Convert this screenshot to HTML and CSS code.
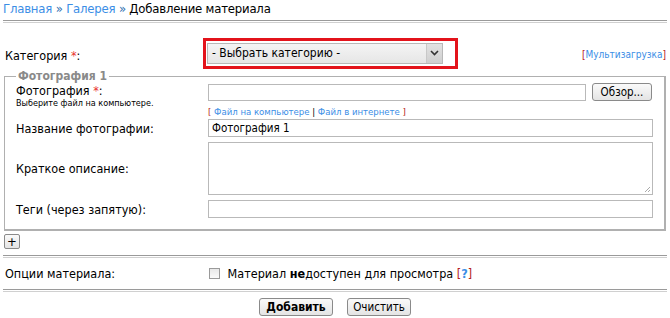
FILE: index.html
```html
<!DOCTYPE html>
<html lang="ru">
<head>
<meta charset="utf-8">
<link rel="stylesheet" href="styles.css">
</head>
<body>
<div class="page">
  <div class="crumbs"><a href="#">Главная</a> <span class="sep">»</span> <a href="#">Галерея</a> <span class="sep">»</span> Добавление материала</div>
  <div class="rule"></div>

  <div class="cat-row">
    <div class="cat-label">Категория <span class="req">*</span>:</div>
    <div class="cat-box">
      <div class="select">
        <span class="select-text">- Выбрать категорию -</span>
        <span class="select-btn"><svg width="9" height="6" viewBox="0 0 9 6"><path d="M1 1 L4.5 4.5 L8 1" fill="none" stroke="#333" stroke-width="1.6"/></svg></span>
      </div>
    </div>
    <div class="multi">[<a href="#">Мультизагрузка</a>]</div>
  </div>

  <fieldset class="photo">
    <legend>Фотография 1</legend>
    <div class="frow r-file">
      <div class="flabel">
        <div>Фотография <span class="req">*</span>:</div>
        <div class="hint">Выберите файл на компьютере.</div>
      </div>
      <div class="fctl">
        <div class="file-line">
          <div class="input file-input"></div>
          <div class="btn browse">Обзор...</div>
        </div>
        <div class="src-links"><span class="br">[</span> <a href="#">Файл на компьютере</a> | <a href="#">Файл в интернете</a> <span class="br">]</span></div>
      </div>
    </div>
    <div class="frow r-name">
      <div class="flabel">Название фотографии:</div>
      <div class="fctl"><div class="input wide">Фотография 1</div></div>
    </div>
    <div class="frow r-desc">
      <div class="flabel">Краткое описание:</div>
      <div class="fctl"><div class="input wide area"><svg class="grip" width="7" height="7" viewBox="0 0 7 7"><path d="M6 1 L1 6 M6 4 L4 6" stroke="#aaa" stroke-width="1"/></svg></div></div>
    </div>
    <div class="frow r-tags">
      <div class="flabel">Теги (через запятую):</div>
      <div class="fctl"><div class="input wide"></div></div>
    </div>
  </fieldset>

  <div class="plus-row"><div class="btn plus">+</div></div>
  <div class="rule"></div>

  <div class="opt-row">
    <div class="opt-label">Опции материала:</div>
    <div class="opt-ctl"><span class="check"></span> Материал <b>не</b>доступен для просмотра <span class="br2">[</span><a href="#" class="q">?</a><span class="br2">]</span></div>
  </div>
  <div class="rule"></div>

  <div class="actions">
    <div class="btn submit">Добавить</div>
    <div class="btn reset">Очистить</div>
  </div>
</div>
</body>
</html>
```
FILE: styles.css
```css
html, body {
  margin: 0;
  padding: 0;
  background: #fff;
}
body {
  font-family: "DejaVu Sans Condensed", "DejaVu Sans", Verdana, sans-serif;
  font-stretch: condensed;
  font-size: 12px;
  color: #000;
}
a {
  color: #3b8ee6;
  text-decoration: none;
}
.page {
  width: 670px;
  padding: 0 3px 0 3px;
  box-sizing: border-box;
}
.crumbs {
  font-size: 13px;
  height: 20px;
  line-height: 18px;
  padding-left: 0;
  letter-spacing: -0.2px;
}
.crumbs .sep {
  color: #2e6fb0;
}
.rule {
  height: 1px;
  border-top: 1px solid #9a9a9a;
  border-bottom: 1px solid #d0d0d0;
  margin: 0 0 0 0;
}
.cat-row {
  display: flex;
  align-items: center;
  height: 44px;
  margin-top: 8px;
}
.cat-label {
  width: 198px;
  font-size: 12.5px;
  padding-left: 2px;
  padding-top: 4px;
}
.req {
  color: #e8322e;
}
.cat-box {
  border: 3px solid #e3131b;
  padding: 2px 12px 2px 1px;
  width: 236px;
  height: 21px;
}
.select {
  display: flex;
  height: 21px;
  border: 1px solid #b8b8b8;
  background: linear-gradient(#f4f4f4, #e6e6e6);
  box-sizing: border-box;
}
.select-text {
  flex: 1;
  font-size: 12px;
  line-height: 19px;
  padding-left: 4px;
}
.select-btn {
  width: 15px;
  display: flex;
  align-items: center;
  justify-content: center;
  background: linear-gradient(#e2e2e2, #cfcfcf);
  border-left: 1px solid #c8c8c8;
}
.multi {
  margin-left: auto;
  font-size: 10px;
  padding-right: 1px;
  padding-top: 2px;
}
.multi, .br, .br2 {
  color: #b42020;
}
fieldset.photo {
  margin: -6px 0 0 1px;
  padding: 0 11px 11px 11px;
  border: 2px solid #b0b0b0;
  border-top-width: 1px;
  border-left-width: 1px;
  width: 636px;
  box-sizing: content-box;
}
fieldset.photo legend {
  font-weight: bold;
  color: #8a8a8a;
  font-size: 12px;
  padding: 0 2px;
  margin-left: 0;
}
.frow {
  display: flex;
}
.flabel {
  width: 192px;
  font-size: 12.5px;
  flex: none;
}
.fctl {
  flex: 1;
}
.r-file .flabel {
  padding-top: 1px;
  line-height: 14px;
}
.hint {
  font-size: 9px;
  line-height: 11px;
}
.file-line {
  display: flex;
  align-items: center;
}
.input {
  border: 1px solid #b9b9b9;
  background: #fff;
  box-sizing: border-box;
  height: 17px;
  font-size: 11.5px;
  line-height: 15px;
  padding-left: 3px;
}
.file-input {
  width: 378px;
}
.btn {
  border: 1px solid #8a8a8a;
  border-radius: 3px;
  background: linear-gradient(#fafafa, #e4e4e4);
  box-sizing: border-box;
  text-align: center;
  font-size: 11.5px;
}
.browse {
  width: 60px;
  height: 18px;
  line-height: 16px;
  margin-left: 6px;
}
.src-links {
  font-size: 9.5px;
  height: 18px;
  line-height: 16px;
  padding-top: 3px;
  box-sizing: border-box;
}
.wide {
  width: 445px;
  height: 18px;
  line-height: 16px;
}
.r-name {
  margin-top: 0;
  align-items: center;
}
.r-desc {
  margin-top: 5px;
  align-items: center;
}
.area {
  height: 53px;
  position: relative;
}
.grip {
  position: absolute;
  right: 1px;
  bottom: 1px;
}
.r-tags {
  margin-top: 5px;
  align-items: center;
}
.plus-row {
  padding: 3px 0 6px 1px;
}
.plus {
  width: 16px;
  height: 15px;
  line-height: 13px;
  font-size: 13px;
  border-radius: 2px;
}
.opt-row {
  display: flex;
  align-items: center;
  height: 31px;
}
.opt-label {
  width: 204px;
  padding-left: 2px;
  font-size: 12.5px;
}
.opt-ctl {
  display: flex;
  align-items: center;
  gap: 0;
  font-size: 12.5px;
  white-space: pre;
}
.check {
  width: 11px;
  height: 11px;
  border: 1px solid #9a9a9a;
  background: linear-gradient(#e8e8e8, #fafafa);
  box-sizing: border-box;
  margin-right: 4px;
}
.q {
  font-weight: bold;
}
.actions {
  display: flex;
  justify-content: center;
  gap: 14px;
  padding-top: 6px;
}
.submit {
  width: 74px;
  height: 18px;
  line-height: 16px;
  font-weight: bold;
  font-size: 12px;
}
.reset {
  width: 64px;
  height: 18px;
  line-height: 16px;
}
```
